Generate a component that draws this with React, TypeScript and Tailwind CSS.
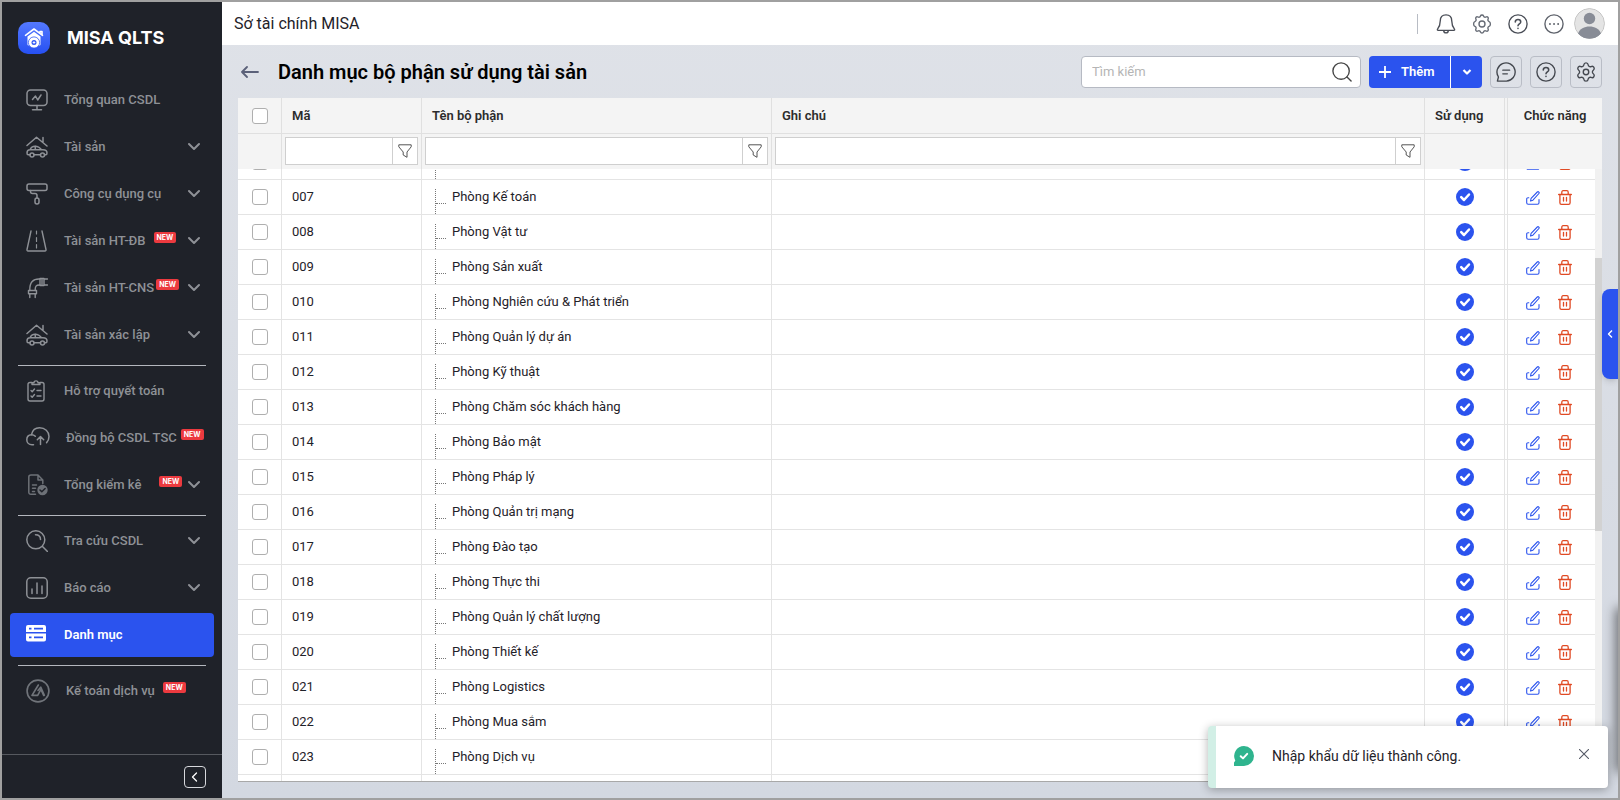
import React, { useState } from 'react';
import { Settings } from 'lucide-react';

type IconProps = { className?: string; strokeWidth?: number; children: React.ReactNode };

const Icon: React.FC<IconProps> = ({ className = 'w-[22px] h-[22px]', strokeWidth = 1.5, children }) => (
  <svg className={className} viewBox="0 0 22 22" fill="none" stroke="currentColor" strokeWidth={strokeWidth} strokeLinecap="round" strokeLinejoin="round" aria-hidden="true">
    {children}
  </svg>
);

const MonitorIcon = () => (
  <Icon>
    <rect x="1" y="1" width="20" height="15.5" rx="3.5" />
    <path d="M11 16.500v4M6.500 20.800h9M6.500 10.500l3-3.500 2.200 4 3.300-5" />
  </Icon>
);

const HouseCarIcon = () => (
  <Icon>
    <path d="M1 9.500l9.500-8.300L21 10M17 6V1.500" />
    <path d="M4 18.800H2.200C1.400 18.800 1 18 1 17c0-2 1-3.200 3-3.200h13c2.500 0 4 1.200 4 3.200 0 1.200-.4 1.800-1.200 1.800h-1.300M8 18.800h6.500M4 13.800c1-2.600 2.500-3.600 5-3.600 3.500 0 4.800 1.200 6.500 3.600M9.300 10.200v3.500" />
    <circle cx="6" cy="19" r="2" />
    <circle cx="16.500" cy="19" r="2" />
  </Icon>
);

const RollerIcon = () => (
  <Icon>
    <rect x="1" y="1" width="20" height="6.500" rx="2" />
    <path d="M4.500 7.500v1c0 1.500.7 2 2 2h2.500c1.300 0 2 .6 2 2V15" />
    <rect x="9" y="15" width="4" height="6" rx="2" />
  </Icon>
);

const RoadIcon = () => (
  <Icon strokeWidth={1.4}>
    <path d="M5 1L1 19.500c-.2 1 .3 1.500 1 1.500h17c.7 0 1.200-.5 1-1.500L16 1" />
    <path d="M10.500 1v3M10.500 7.500v4M10.500 14.500v3.500" strokeWidth="1.200" />
  </Icon>
);

const PipeIcon = () => (
  <Icon strokeWidth={1.4}>
    <path d="M14 2C7 1.500 3.500 5.500 3.800 13.500M14 8c-4-.2-5 1.500-4.800 5.500" />
    <path d="M14 1.500h4v7h-4zM18 2h3.500M18 8h3.500M16 1.500v7M2.500 13.500h8v3.300h-8zM3.800 16.800V20.500M9.200 16.800V20.500" />
  </Icon>
);

const ClipboardIcon = () => (
  <Icon strokeWidth={1.4}>
    <path d="M6 2.500H4c-1.300 0-2 .8-2 2V19c0 1.300.7 2 2 2h12c1.300 0 2-.7 2-2V4.500c0-1.200-.7-2-2-2h-2" />
    <path d="M6 4.500V2.700h2C8 .2 12 .2 12 2.700h2v1.800zM5 10.500l1.200 1.200L8.500 9M5 16l1.200 1.200L8.500 14.500M11 10.500h4M11 16h4" />
  </Icon>
);

const CloudIcon = () => (
  <Icon className="w-6 h-[22px]">
    <path d="M6.500 17.800H5C1.800 17.800-.2 15.500-.2 12.700c0-2.900 2-4.900 4.700-5C5.500 3 8.500.8 12.500.8c5.500 0 9.500 3.700 9.500 8.800 0 2.600-.8 4.400-2.400 6" />
    <path d="M4.500 7.700c1.600 0 2.800.5 3.800 1.500M13.500 17.500V10M10.300 12.700l3.200-3.200 3.200 3.200" />
  </Icon>
);

const FileCheckIcon = () => (
  <span className="text-[#6d7177]">
    <Icon>
      <path d="M9.500 20.300H5c-1.500 0-2.200-.8-2.200-2V3c0-1.300.7-2 2.200-2h7l4.800 5v3.500M12 1v5h4.800M6.500 11h4M6.500 14.300h3M6.500 17.500h2" />
      <circle cx="16.500" cy="16" r="5.200" fill="currentColor" stroke="none" />
      <path d="M14 16l1.800 1.800 3.300-3.300" stroke="#1f2229" />
    </Icon>
  </span>
);

const LookupIcon = () => (
  <Icon>
    <circle cx="9.800" cy="9.800" r="9" />
    <path d="M16.500 16.500l5 5M9.500 4.800c3.200 0 5 2 5 4.800" />
  </Icon>
);

const ReportIcon = () => (
  <Icon>
    <rect x=".8" y=".8" width="20.400" height="20.400" rx="4" />
    <path d="M6 12v4.500M11 6v10.500M16 9v7.500" />
  </Icon>
);

const CatalogIcon = () => (
  <svg className="w-5 h-[22px]" viewBox="0 0 20 22" fill="currentColor" aria-hidden="true">
    <path fillRule="evenodd" d="M2 1h16a2 2 0 012 2v5H0V3a2 2 0 012-2zm1 2.700v1.800h2.500V3.700zm5 0v1.800h9V3.700zM0 9.500h20v6a2 2 0 01-2 2H2a2 2 0 01-2-2zm3 3v1.800h2.500v-1.800zm5 0v1.800h9v-1.800z" />
  </svg>
);

const AccountingIcon = () => (
  <span className="text-[#70747a]">
    <Icon className="w-6 h-6" strokeWidth={1.5}>
      <circle cx="11" cy="11" r="10" />
      <path d="M11.300 5.500L5.500 15h5.200l3-5.500 2.500 5.500M11 10.500l2.500-3 3.300 7.500" />
    </Icon>
  </span>
);

const FilterIcon = () => (
  <svg className="w-3.5 h-3.5" viewBox="0 0 14 14" fill="none" stroke="#555" strokeLinejoin="round" aria-hidden="true">
    <path d="M.8.800h12.400v2L9 8v5.300L5.200 11V8L.800 2.800z" />
  </svg>
);

const EditIcon = () => (
  <svg className="w-3.5 h-3.5" viewBox="0 0 14 14" fill="none" stroke="currentColor" strokeWidth="1.100" strokeLinecap="round" strokeLinejoin="round" aria-hidden="true">
    <path d="M2.800 6.800H2C1.200 6.800.700 7.300.700 8v3.800c0 .9.600 1.500 1.500 1.500h9.300c.9 0 1.500-.6 1.500-1.500V8.500" />
    <path d="M4.500 10l.6-2.600L11.300 1c1-.9 2.500.500 1.600 1.500L6.900 9.200z" />
  </svg>
);

const TrashIcon = () => (
  <svg className="w-3.5 h-[15px]" viewBox="0 0 14 15" fill="none" stroke="currentColor" strokeWidth="1.300" strokeLinecap="round" strokeLinejoin="round" aria-hidden="true">
    <path d="M.600 4.500h12.800M3.800 4V2.200c0-1 .5-1.500 1.300-1.500h3.800c.8 0 1.300.5 1.300 1.500V4M1.900 4.500v8.200c0 1 .6 1.600 1.500 1.600h7.200c.9 0 1.500-.6 1.500-1.600V4.500M5.500 7.300v3.700M8.500 7.300v3.700" />
  </svg>
);

const HelpIcon = () => (
  <Icon className="w-5 h-5">
    <circle cx="11" cy="11" r="10" />
    <path d="M8 8.800C8 7 9.300 6 11 6s3 1 3 2.700c0 2.200-3 2.200-3 4.300M11 15.800v.2" strokeWidth="1.700" />
  </Icon>
);

const GearIcon = () => (
  <Icon className="w-5 h-5">
    <circle cx="11" cy="11" r="3.300" />
    <path d="M9.300 2.200c.5-1.500 2.900-1.500 3.400 0 .4 1.300 1.600 1.700 2.700 1.100 1.700-.9 3.200.600 2.300 2.300-.6 1.100-.1 2.300 1.100 2.700 1.900.600 1.900 4.800 0 5.400-1.200.4-1.700 1.600-1.100 2.700.9 1.700-.6 3.200-2.300 2.300-1.100-.6-2.300-.1-2.700 1.100-.5 1.500-2.900 1.500-3.400 0-.4-1.200-1.600-1.700-2.700-1.100-1.700.9-3.200-.6-2.300-2.300.6-1.100.1-2.300-1.100-2.700-1.900-.6-1.900-4.800 0-5.400 1.200-.4 1.700-1.600 1.100-2.700-.9-1.700.6-3.200 2.300-2.300 1.100.6 2.300.2 2.700-1.100z" />
  </Icon>
);

type MenuItem = { label: string; icon: React.FC; badge?: string; expandable?: boolean; active?: boolean; wide?: boolean };

// badge holds the spacing between the label and its NEW tag
const menuGroups: MenuItem[][] = [
  [
    { label: 'Tổng quan CSDL', icon: MonitorIcon },
    { label: 'Tài sản', icon: HouseCarIcon, expandable: true },
    { label: 'Công cụ dụng cụ', icon: RollerIcon, expandable: true },
    { label: 'Tài sản HT-ĐB', icon: RoadIcon, badge: 'ml-2', expandable: true },
    { label: 'Tài sản HT-CNS', icon: PipeIcon, badge: 'ml-0.5', expandable: true },
    { label: 'Tài sản xác lập', icon: HouseCarIcon, expandable: true },
  ],
  [
    { label: 'Hỗ trợ quyết toán', icon: ClipboardIcon },
    { label: 'Đồng bộ CSDL TSC', icon: CloudIcon, badge: 'ml-1', wide: true },
    { label: 'Tổng kiểm kê', icon: FileCheckIcon, badge: 'ml-[18px]', expandable: true },
  ],
  [
    { label: 'Tra cứu CSDL', icon: LookupIcon, expandable: true },
    { label: 'Báo cáo', icon: ReportIcon, expandable: true },
    { label: 'Danh mục', icon: CatalogIcon, active: true },
  ],
  [{ label: 'Kế toán dịch vụ', icon: AccountingIcon, badge: 'ml-2', wide: true }],
];

const departments = [
  { code: '006', name: 'Phòng Kinh doanh' },
  { code: '007', name: 'Phòng Kế toán' },
  { code: '008', name: 'Phòng Vật tư' },
  { code: '009', name: 'Phòng Sản xuất' },
  { code: '010', name: 'Phòng Nghiên cứu & Phát triển' },
  { code: '011', name: 'Phòng Quản lý dự án' },
  { code: '012', name: 'Phòng Kỹ thuật' },
  { code: '013', name: 'Phòng Chăm sóc khách hàng' },
  { code: '014', name: 'Phòng Bảo mật' },
  { code: '015', name: 'Phòng Pháp lý' },
  { code: '016', name: 'Phòng Quản trị mạng' },
  { code: '017', name: 'Phòng Đào tạo' },
  { code: '018', name: 'Phòng Thực thi' },
  { code: '019', name: 'Phòng Quản lý chất lượng' },
  { code: '020', name: 'Phòng Thiết kế' },
  { code: '021', name: 'Phòng Logistics' },
  { code: '022', name: 'Phòng Mua sắm' },
  { code: '023', name: 'Phòng Dịch vụ' },
];

const checkboxClass = 'block mx-auto w-4 h-4 appearance-none rounded-[3px] border border-[#afafaf] bg-white checked:bg-[#2b53ee]';

const Sidebar = () => (
  <aside className="w-[220px] shrink-0 flex flex-col bg-[#1f2229] text-[#8e9196]">
    <div className="flex items-center h-[71px] pl-4 gap-[17px]">
      <svg className="w-8 h-8" viewBox="0 0 32 32" aria-hidden="true">
        <defs>
          <linearGradient id="logo" x1="0" y1="0" x2="0" y2="1">
            <stop offset="0" stopColor="#5479ff" />
            <stop offset="1" stopColor="#2650f2" />
          </linearGradient>
        </defs>
        <rect width="32" height="32" rx="10" fill="url(#logo)" />
        <path d="M7.500 13.300L16 7l8.500 6.300M22 11V9.500h2V13" fill="none" stroke="#fff" strokeWidth="1.600" strokeLinecap="round" strokeLinejoin="round" />
        <path d="M16 9.800l6.500 4.800v7.600c0 .8-.4 1.200-1.200 1.200H10.700c-.8 0-1.200-.4-1.200-1.200v-7.600z" fill="#fff" />
        <circle cx="16" cy="20.500" r="5.600" fill="#fff" stroke="#3059f4" strokeWidth=".8" />
        <circle cx="16" cy="20.500" r="2.500" fill="#2f58f4" />
        <path d="M16 19.200v2.600M14.700 20.500h2.600" stroke="#fff" strokeWidth=".9" />
      </svg>
      <span className="font-[Inter,sans-serif] text-lg font-bold text-white">MISA QLTS</span>
    </div>
    <nav className="flex flex-col gap-[3px] px-2 pt-[5px]">
      {menuGroups.map((group, i) => (
        <React.Fragment key={i}>
          {i > 0 && <hr className="mx-2 mt-[5px] border-t border-[#b4b7be]" />}
          {group.map(({ label, icon: ItemIcon, badge, expandable, active, wide }) => (
            <a
              key={label}
              href="#"
              className={`flex items-center h-11 pl-4 pr-[14px] rounded text-[13px] ${active ? 'bg-[#2b53ee] text-white font-semibold' : 'font-medium hover:text-white'}`}
            >
              <span className={`flex shrink-0 ${wide ? 'w-10' : 'w-[38px]'}`}><ItemIcon /></span>
              <span className="whitespace-nowrap">{label}</span>
              {badge && (
                <span className={`mb-2 h-[11px] px-[3px] rounded-xs bg-[#ec3a3f] text-[7px] leading-[11px] font-bold text-white font-[Inter,sans-serif] ${badge}`}>NEW</span>
              )}
              {expandable && (
                <svg className="w-3 h-3 shrink-0 ml-auto" viewBox="0 0 12 12" fill="none" stroke="currentColor" strokeWidth="2" strokeLinecap="round" strokeLinejoin="round" aria-hidden="true">
                  <path d="M1 3l5 5 5-5" />
                </svg>
              )}
            </a>
          ))}
        </React.Fragment>
      ))}
    </nav>
    <div className="mt-auto h-11 flex items-center justify-end pr-4 border-t border-[#56595f]">
      <button aria-label="Thu gọn" className="w-[22px] h-[22px] flex items-center justify-center rounded border border-[#d6d8dc] text-white">
        <svg className="w-2 h-2.5" viewBox="0 0 8 10" fill="none" stroke="currentColor" strokeWidth="1.300" strokeLinecap="round" strokeLinejoin="round">
          <path d="M5.500 1l-4 4 4 4" />
        </svg>
      </button>
    </div>
  </aside>
);

const TopBar = () => (
  <header className="h-[43px] shrink-0 flex items-center justify-between bg-white pl-3 pr-[13px]">
    <span className="text-base text-[#1f2229]">Sở tài chính MISA</span>
    <div className="flex items-center gap-4 text-[#4a4e57]">
      <span className="w-px h-5 mr-0.5 bg-[#b8bcc4]" />
      <button aria-label="Thông báo">
        <Icon className="w-5 h-5">
          <path d="M11 1c-4 0-6.300 2.800-6.300 6.500 0 5-1.500 7.300-3 9.200-.4.600-.2 1.300.6 1.300h17.400c.8 0 1-.7.6-1.300-1.500-1.900-3-4.200-3-9.200C17.300 3.800 15 1 11 1zM8.500 18.500c.3 3 4.700 3 5 0" />
        </Icon>
      </button>
      <button aria-label="Thiết lập" className="text-[#666b75]"><GearIcon /></button>
      <button aria-label="Trợ giúp"><HelpIcon /></button>
      <button aria-label="Thêm nữa" className="text-[#5e626b]">
        <Icon className="w-5 h-5">
          <circle cx="11" cy="11" r="10" />
          <path d="M6.500 11h.1M11 11h.1M15.500 11h.1" strokeWidth="2" />
        </Icon>
      </button>
      <button aria-label="Tài khoản" className="-ml-1.5">
        <svg className="w-[31px] h-[31px] rounded-full" viewBox="0 0 31 31" aria-hidden="true">
          <circle cx="15.500" cy="15.500" r="15" fill="#e4e4e4" stroke="#c4c4c4" />
          <circle cx="15.500" cy="10.500" r="5.700" fill="#888c96" />
          <path d="M4 25.500c3-9.500 20-9.500 23 0a15 15 0 01-23 0z" fill="#888c96" />
        </svg>
      </button>
    </div>
  </header>
);

const toolClass = 'w-8 h-8 flex items-center justify-center rounded border border-[#b9bdc6] text-[#44484f]';

const Toolbar = () => (
  <div className="h-[53px] shrink-0 flex items-center gap-2 pl-[19px] pr-4">
    <button aria-label="Quay lại" className="text-[#5b6179]">
      <svg className="w-[18px] h-3" viewBox="0 0 18 12" fill="none" stroke="currentColor" strokeWidth="1.800" strokeLinecap="round" strokeLinejoin="round">
        <path d="M17 6H1.500M6 1L1 6l5 5" />
      </svg>
    </button>
    <h1 className="ml-[11px] mr-auto text-xl font-semibold text-black whitespace-nowrap">Danh mục bộ phận sử dụng tài sản</h1>
    <label className="flex items-center w-[280px] h-8 pl-2.5 pr-2 bg-white rounded border border-[#b6bac3]">
      <input aria-label="Tìm kiếm" placeholder="Tìm kiếm" className="flex-1 min-w-0 text-[13px] outline-none placeholder:text-[#b5b5b5]" />
      <Icon className="w-5 h-5 text-[#444]">
        <circle cx="10" cy="10" r="9" />
        <path d="M16.500 16.500l4.500 4.500" />
      </Icon>
    </label>
    <div className="flex h-8 rounded overflow-hidden bg-[#2b53ee] text-white">
      <button className="flex items-center w-[81px] pl-2.5 gap-2.5 text-[13px] font-semibold">
        <svg className="w-3 h-3" viewBox="0 0 12 12" stroke="currentColor" strokeWidth="1.800" aria-hidden="true"><path d="M6 0v12M0 6h12" /></svg>
        Thêm
      </button>
      <button aria-label="Tùy chọn thêm" className="w-8 flex items-center justify-center border-l border-white">
        <svg className="w-2.5 h-2" viewBox="0 0 10 8" fill="none" stroke="currentColor" strokeWidth="2.200" strokeLinejoin="round"><path d="M1.500 2L5 5.500 8.500 2" /></svg>
      </button>
    </div>
    <button aria-label="Phản hồi" className={toolClass}>
      <Icon className="w-5 h-5">
        <path d="M1.500 21l1.200-4.500A10 10 0 1111.500 21z" />
        <path d="M7.500 9h7.500M7.500 13h5" />
      </Icon>
    </button>
    <button aria-label="Hướng dẫn" className={toolClass}><HelpIcon /></button>
    <button aria-label="Tùy chỉnh" className={toolClass}><Settings className="w-[22px] h-[22px]" strokeWidth={1.5} /></button>
  </div>
);

const FilterBox: React.FC<{ label: string }> = ({ label }) => (
  <div className="flex h-7 mx-[3px] mt-[3px] bg-white border border-[#cfcfcf]">
    <input aria-label={`Lọc ${label}`} className="flex-1 min-w-0 px-2 text-[13px] outline-none" />
    <button aria-label={`Bộ lọc ${label}`} className="w-[25px] flex items-center justify-center border-l border-[#cfcfcf]"><FilterIcon /></button>
  </div>
);

const Columns: React.FC<{ last: string }> = ({ last }) => (
  <colgroup>
    <col className="w-11" />
    <col className="w-[140px]" />
    <col className="w-[350px]" />
    <col />
    <col className="w-20" />
    <col className="w-[3px]" />
    <col className={last} />
  </colgroup>
);

const DepartmentTable = () => (
  <div className="flex-1 min-h-0 mx-4 flex flex-col bg-white border-b border-[#a8a8a8]">
    <table className="w-full table-fixed border-separate border-spacing-0 shrink-0 bg-[#f4f4f4] text-[13px] text-[#2c2c2c]">
      <Columns last="w-[94px]" />
      <thead className="[&_th]:border-r [&_th]:border-[#e0e0e0] [&_th:last-child]:border-r-0 [&_th]:font-semibold">
        <tr className="h-9 [&_th]:border-b">
          <th><input type="checkbox" aria-label="Chọn tất cả" className={checkboxClass} /></th>
          <th className="text-left pl-2.5">Mã</th>
          <th className="text-left pl-2.5">Tên bộ phận</th>
          <th className="text-left pl-2.5">Ghi chú</th>
          <th className="text-left pl-2.5">Sử dụng</th>
          <th />
          <th>Chức năng</th>
        </tr>
        <tr className="h-[35px] align-top">
          <th />
          <th><FilterBox label="Mã" /></th>
          <th><FilterBox label="Tên bộ phận" /></th>
          <th><FilterBox label="Ghi chú" /></th>
          <th />
          <th />
          <th />
        </tr>
      </thead>
    </table>
    <div className="flex-1 min-h-0 flex overflow-hidden">
      <div className="flex-1 min-w-0 overflow-hidden">
        <table className="w-full -mt-6 table-fixed border-separate border-spacing-0 text-[13px] text-[#1f2229]">
          <Columns last="w-[87px]" />
          <tbody className="[&_td]:border-r [&_td]:border-b [&_td]:border-[#e4e4e4] [&_td:last-child]:border-r-0">
            {departments.map(({ code, name }) => (
              <tr key={code} className="h-[35px]">
                <td><input type="checkbox" aria-label={`Chọn ${name}`} className={checkboxClass} /></td>
                <td className="pl-2.5">{code}</td>
                <td className="pl-[13px]">
                  <div className="flex items-end">
                    <div className="w-[11px] h-[25px] mt-[9px] shrink-0 border-l border-dotted border-[#777]">
                      <div className="h-[15px] border-b border-dotted border-[#777]" />
                    </div>
                    <span className="pl-1.5 h-[27px] whitespace-nowrap">{name}</span>
                  </div>
                </td>
                <td />
                <td>
                  <svg className="mx-auto w-[18px] h-[18px]" viewBox="0 0 18 18" role="img" aria-label="Đang sử dụng">
                    <circle cx="9" cy="9" r="9" fill="#2b53ee" />
                    <path d="M5.200 9.200l2.800 2.800 5-5.500" fill="none" stroke="#fff" strokeWidth="2.500" strokeLinecap="round" strokeLinejoin="round" />
                  </svg>
                </td>
                <td />
                <td>
                  <div className="flex items-center gap-[18px] pl-[18px]">
                    <button aria-label={`Sửa ${name}`} className="pt-0.5 text-[#2b53ee]"><EditIcon /></button>
                    <button aria-label={`Xóa ${name}`} className="text-[#e04a24]"><TrashIcon /></button>
                  </div>
                </td>
              </tr>
            ))}
            <tr className="h-[35px]"><td /><td /><td /><td /><td /><td /><td /></tr>
          </tbody>
        </table>
      </div>
      <div className="w-[7px] shrink-0 pt-[89px] bg-[#f1f1f1]">
        <div className="h-[273px] bg-[#d2d2d2]" />
      </div>
    </div>
  </div>
);

const Toast: React.FC<{ onClose: () => void }> = ({ onClose }) => (
  <div role="status" className="absolute right-[10px] bottom-[10px] w-[400px] h-[62px] flex items-center rounded bg-white border-l-8 border-[#d2efe6] pl-[18px] pr-[19px] pb-0.5 shadow-[0_2px_10px_rgba(0,0,0,0.3)]">
    <svg className="w-5 h-5" viewBox="0 0 20 20" aria-hidden="true">
      <path d="M10 0a10 10 0 110 20H0v-3.500l1.300-1.800A10 10 0 0110 0z" fill="#2fb48e" />
      <path d="M6.700 10.200l2.300 2.200 4.200-4.500" fill="none" stroke="#fff" strokeWidth="2" strokeLinecap="round" strokeLinejoin="round" />
    </svg>
    <span className="ml-[18px] text-sm text-[#1f2229]">Nhập khẩu dữ liệu thành công.</span>
    <button aria-label="Đóng" onClick={onClose} className="ml-auto mb-1 text-[#555a66]">
      <svg className="w-2.5 h-2.5" viewBox="0 0 10 10" stroke="currentColor" strokeWidth="1.100"><path d="M0 0l10 10M10 0L0 10" /></svg>
    </button>
  </div>
);

const App: React.FC = () => {
  const [toastOpen, setToastOpen] = useState(true);

  return (
    <div className="relative h-screen flex overflow-hidden border-2 border-[#a0a0a0] font-[Roboto,sans-serif]">
      <Sidebar />
      <div className="flex-1 min-w-0 flex flex-col bg-linear-to-b from-[#dfe2e8] to-[#d3d8e1]">
        <TopBar />
        <Toolbar />
        <main className="flex-1 min-h-0 flex flex-col pb-4">
          <DepartmentTable />
        </main>
      </div>
      <button aria-label="Mở bảng bên" className="absolute right-0 top-[287px] w-4 h-[90px] flex items-center justify-center rounded-l-lg bg-[#2b53ee] text-white shadow-md">
        <svg className="w-1.5 h-2" viewBox="0 0 6 8" fill="none" stroke="currentColor" strokeWidth="1.400" strokeLinejoin="round"><path d="M5 .5L1.500 4 5 7.500" /></svg>
      </button>
      {/* Shadow of the collapsed side panel */}
      <div className="absolute left-full bottom-7 w-2 h-40 shadow-[0_0_12px_2px_rgba(0,0,0,0.55)]" />
      {toastOpen && <Toast onClose={() => setToastOpen(false)} />}
    </div>
  );
};

export default App;
